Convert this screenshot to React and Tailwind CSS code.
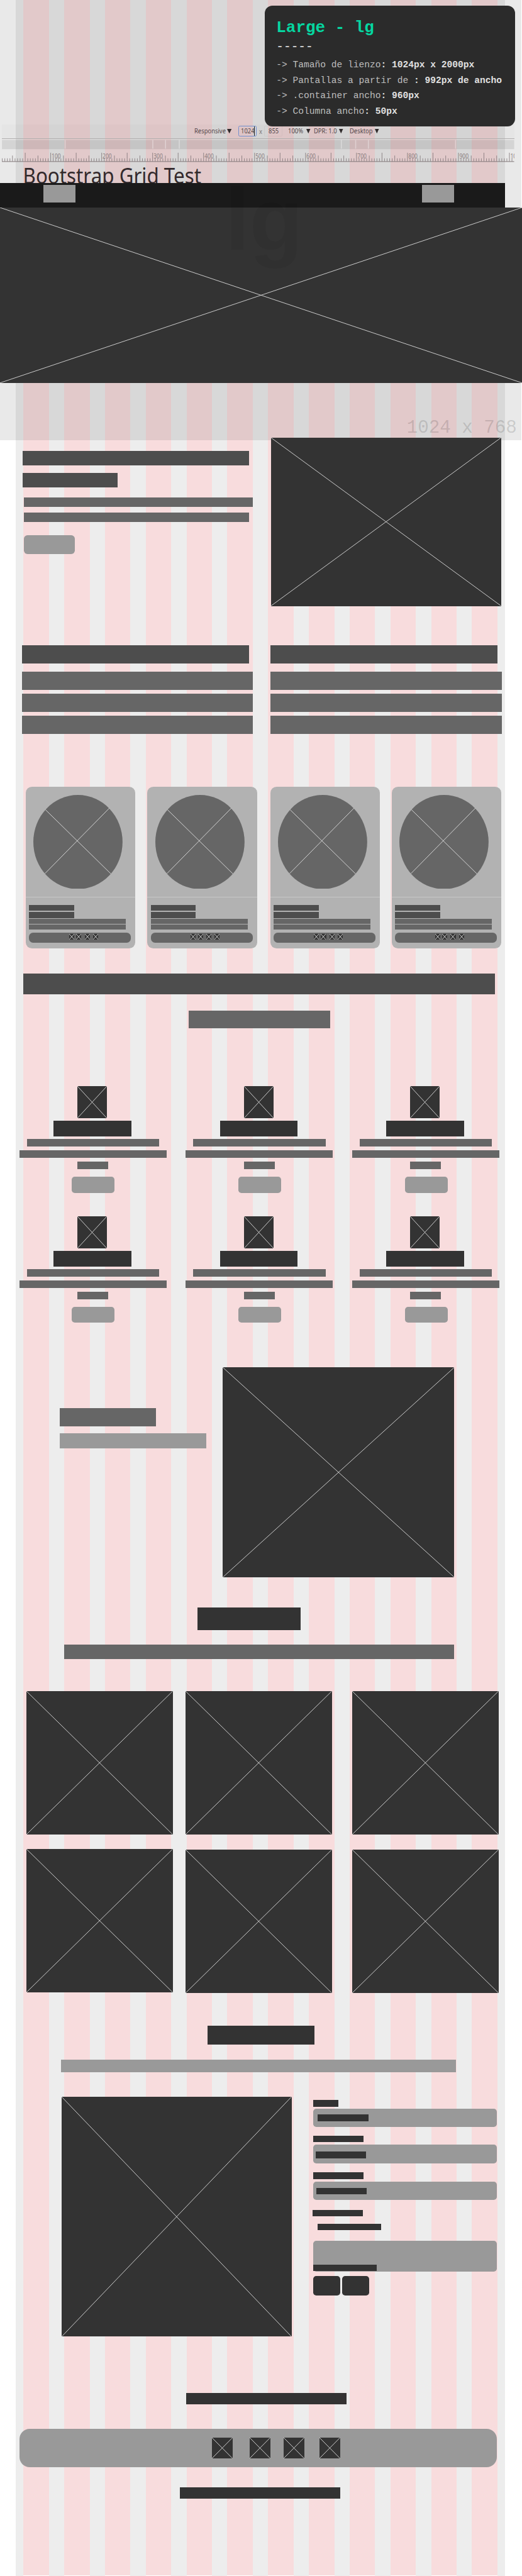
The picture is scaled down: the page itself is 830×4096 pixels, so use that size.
import React from "react";

/* Placeholder picture: a filled box with both diagonals. */
function Picture({ className }) {
  return (
    <div className={`shrink-0 bg-[#333333] ${className}`}>
      <svg className="block h-full w-full" viewBox="0 0 100 100" preserveAspectRatio="none">
        <path d="M0 0L100 100M100 0L0 100" fill="none" stroke="#dedede" strokeWidth="1.1" vectorEffect="non-scaling-stroke" />
      </svg>
    </div>
  );
}

/* Placeholder line of text. */
function Bar({ className }) {
  return <div className={`shrink-0 ${className}`} />;
}

function GridColumns() {
  return (
    <div className="absolute inset-y-0 left-[31px] flex w-[960px] gap-[30px] bg-[#ededed] px-[15px]">
      {Array.from({ length: 12 }, (_, i) => (
        <div key={i} className="h-full w-[50px] border-b-2 border-white bg-[#f8dcdd]" />
      ))}
    </div>
  );
}

function InfoLine({ label, value }) {
  return (
    <p className="h-[30.2px] text-[#bdbdbd]">
      -&gt; {label}
      <b className="text-[#e0e0e0]">: {value}</b>
    </p>
  );
}

function InfoPanel() {
  return (
    <div className="relative z-10 ml-[520px] h-[237px] w-[491px] shrink-0 whitespace-pre rounded-[15px] bg-[#2b2b2b] pl-[22px] pt-[24px] font-['Liberation_Mono','Courier_New',monospace] text-[18px] leading-[30px]">
      <h1 className="h-[40px] text-[32px] font-bold leading-[40px] text-[#06d6a0]">Large - lg</h1>
      <p className="mt-[3px] h-[30px] text-[24px] leading-[30px] text-[#e6e6e6]">-----</p>
      <div className="mt-[4.5px]">
        <InfoLine label="Tamaño de lienzo" value="1024px x 2000px" />
        <InfoLine label="Pantallas a partir de " value="992px de ancho" />
        <InfoLine label=".container ancho" value="960px" />
        <InfoLine label="Columna ancho" value="50px" />
      </div>
    </div>
  );
}

function Label({ className, children }) {
  return (
    <div className={`shrink-0 whitespace-nowrap ${className}`}>
      <span className="inline-block origin-left scale-x-[0.83]">{children}</span>
    </div>
  );
}

function Caret({ className }) {
  return (
    <svg className={`h-[9px] shrink-0 ${className}`} viewBox="0 0 9 9" preserveAspectRatio="none">
      <path d="M0 0H9L4.5 9Z" fill="#2f2a2b" />
    </svg>
  );
}

function Toolbar() {
  return (
    <div className="ml-[4px] flex h-[29px] w-[1005px] items-center border-b border-[#b0aeae] bg-black/[0.015] pl-[377px] pb-[2px] font-['Noto_Sans','Open_Sans',sans-serif] text-[14px] leading-[20px] text-[#544649]">
      <Label className="w-[65px]">Responsive</Label>
      <Caret className="w-[9px]" />
      <div className="ml-[13px] flex h-[21px] w-[36px] shrink-0 items-center rounded-[3px] border-2 border-[#7390d0] pl-[3px]">
        <Label className="w-[26px]">1024</Label>
        <div className="h-[18px] w-px shrink-0 bg-[#222222]" />
      </div>
      <Label className="ml-[4px] w-[10.5px] pt-[2px] text-[#7d7779]">x</Label>
      <div className="flex h-[21px] w-[35px] shrink-0 items-center rounded-[2px] border border-black/[0.04] pl-[7px]">
        <Label className="w-[20px]">855</Label>
      </div>
      <Label className="ml-[12px] w-[36px]">100%</Label>
      <Caret className="w-[8px]" />
      <Label className="ml-[6px] w-[50px]">DPR: 1.0</Label>
      <Caret className="w-[8px]" />
      <Label className="ml-[13px] w-[49px]">Desktop</Label>
      <Caret className="w-[8px]" />
    </div>
  );
}

const breakpoints = [128, 300, 325, 352, 670, 698, 723, 894];

function Ruler() {
  const ticks = [];
  for (let n = 5; n <= 1005; n += 5) {
    const height = n % 50 === 0 ? 17 : n % 25 === 0 ? 11.5 : 6;
    ticks.push(<path key={n} d={`M${n - 4.3} 44V${44 - height}`} stroke="#7d7375" strokeWidth="1" />);
  }
  return (
    <svg className="ml-[4px] block h-[45px] w-[1005px] shrink-0" viewBox="0 0 1005 45">
      <rect x="0" y="2" width="1005" height="18" fill="#000" fillOpacity="0.085" />
      {breakpoints.map((x) => (
        <rect key={x} x={x - 5} y="2" width="2" height="17" fill="#fff" fillOpacity="0.35" />
      ))}
      {ticks}
      <path d="M0 44.3H1005" stroke="#7d7375" strokeWidth="1.2" />
      <g fontFamily="'Noto Sans', sans-serif" fontSize="13" fill="#8a7d7f">
        {[100, 200, 300, 400, 500, 600, 700, 800, 900].map((n) => (
          <text key={n} x={n - 2.5} y="38" textLength="18" lengthAdjust="spacingAndGlyphs">{n}</text>
        ))}
        <text x="997.5" y="38" textLength="24" lengthAdjust="spacingAndGlyphs">1000</text>
      </g>
    </svg>
  );
}

function Header() {
  return (
    <header className="flex h-[359px] flex-col overflow-hidden">
      <div className="h-[244px] shrink-0 pt-[11px]">
        <InfoPanel />
      </div>
      <Toolbar />
      <Ruler />
      <h2 className="h-[41px] origin-left scale-x-[0.92] whitespace-nowrap pl-[49px] font-['Noto_Sans','Open_Sans',sans-serif] text-[42px] leading-[53px] text-[#332a2c]">
        Bootstrap Grid Test
      </h2>
    </header>
  );
}

function Nav() {
  return (
    <nav className="flex h-[48px] w-[991px] justify-between bg-[#1a1a1a] pl-[85px] pr-[100.5px] pt-[4px]">
      <Bar className="h-[34px] w-[62.5px] bg-[#999999]" />
      <Bar className="h-[34px] w-[62.5px] bg-[#999999]" />
    </nav>
  );
}

function Intro() {
  return (
    <section className="flex h-[514.3px] pt-[108.2px]">
      <div className="w-[532px] pl-[44px] pt-[25.3px]">
        <Bar className="h-[28.2px] w-[444px] bg-[#4d4d4d]" />
        <Bar className="mt-[15.5px] h-[27.8px] w-[187px] bg-[#4d4d4d]" />
        <Bar className="ml-[3.5px] mt-[20px] h-[17.9px] w-[448.5px] bg-[#666666]" />
        <Bar className="ml-[3.5px] mt-[11.6px] h-[18.2px] w-[441px] bg-[#666666]" />
        <Bar className="ml-[3.5px] mt-[25.7px] h-[37.1px] w-[99px] rounded-[7px] bg-[#999999]" />
      </div>
      <Picture className="h-[329.8px] w-[451px]" />
    </section>
  );
}

function Paragraph() {
  return (
    <div className="w-[453px]">
      <Bar className="h-[36.3px] w-[445px] bg-[#4d4d4d]" />
      <Bar className="mt-[15.9px] h-[35.5px] bg-[#666666]" />
      <Bar className="mt-[7.6px] h-[36px] bg-[#666666]" />
      <Bar className="mt-[7.9px] h-[35.6px] bg-[#666666]" />
    </div>
  );
}

function Paragraphs() {
  return (
    <section className="flex h-[277.6px] gap-[35px] pl-[43px]">
      <Paragraph />
      <Paragraph />
    </section>
  );
}

function ProfileCard({ className }) {
  return (
    <div className={`h-[317px] w-[215px] shrink-0 rounded-[12px] bg-[#b2b2b2] ${className}`}>
      <div className="h-[218px] border-b border-[#c8c8c8] pl-[15.3px] pt-[16px]">
        <svg className="block h-[184.6px] w-[175px]" viewBox="0 0 175 184.6">
          <ellipse cx="87.5" cy="92.3" rx="87.5" ry="92.3" fill="#666666" />
          <path d="M24 29.2L152 154.6M149 26L23 154" fill="none" stroke="#dedede" strokeWidth="1.1" />
        </svg>
      </div>
      <div className="pl-[6.5px] pt-[14.1px]">
        <Bar className="h-[11.9px] w-[88.5px] bg-[#4d4d4d]" />
        <Bar className="mt-[2px] h-[11.9px] w-[88.5px] bg-[#4d4d4d]" />
        <Bar className="mt-[2.3px] h-[9px] w-[190px] bg-[#666666]" />
        <Bar className="mt-[1.9px] h-[9px] w-[190px] bg-[#666666]" />
        <div className="mt-[6.3px] flex h-[19.6px] w-[200px] rounded-[8px] bg-[#666666] pl-[78.5px] pt-[3px]">
          <Picture className="h-[11px] w-[10px]" />
          <Picture className="ml-[4.5px] h-[11px] w-[10px]" />
          <Picture className="ml-[6.2px] h-[11px] w-[10px]" />
          <Picture className="ml-[6.2px] h-[11px] w-[10px]" />
        </div>
      </div>
    </div>
  );
}

function Profiles() {
  return (
    <section className="flex h-[367.1px] pl-[50.3px]">
      <ProfileCard />
      <ProfileCard className="ml-[24px]" />
      <ProfileCard className="ml-[26px]" />
      <ProfileCard className="ml-[23px]" />
    </section>
  );
}

function Feature() {
  return (
    <div className="h-[255.2px] w-[288.5px]">
      <Picture className="ml-[114px] h-[63px] w-[58px]" />
      <Bar className="ml-[67px] mt-[5.8px] h-[30px] w-[152.5px] bg-[#333333]" />
      <Bar className="ml-[14.5px] mt-[5.3px] h-[14.7px] w-[259.5px] bg-[#666666]" />
      <Bar className="mt-[8.1px] h-[14.5px] bg-[#666666]" />
      <Bar className="ml-[114px] mt-[7.5px] h-[15px] w-[60.5px] bg-[#666666]" />
      <Bar className="ml-[103px] mt-[14.1px] h-[31.8px] w-[84px] rounded-[6px] bg-[#999999]" />
    </div>
  );
}

function Features() {
  return (
    <section className="h-[772px]">
      <Bar className="ml-[45.7px] h-[40.7px] w-[925.5px] bg-[#4d4d4d]" />
      <Bar className="ml-[370.6px] mt-[32.2px] h-[33.9px] w-[277px] bg-[#666666]" />
      <div className="mt-[113.5px] grid w-max grid-cols-3 gap-x-[38px] pl-[38px]">
        {Array.from({ length: 6 }, (_, i) => (
          <Feature key={i} />
        ))}
      </div>
    </section>
  );
}

function Showcase() {
  return (
    <section className="flex h-[471.9px]">
      <div className="w-[436.3px] pl-[117px] pt-[80px]">
        <Bar className="h-[36px] w-[189.5px] bg-[#666666]" />
        <Bar className="mt-[13.8px] h-[29px] w-[288px] bg-[#999999]" />
      </div>
      <Picture className="h-[412.3px] w-[454.7px]" />
    </section>
  );
}

function GalleryColumn({ className }) {
  return (
    <div className={`flex flex-col gap-[28.7px] ${className}`}>
      <Picture className="h-[281.3px] w-[287px]" />
      <Picture className="h-[281.3px] w-[287px]" />
    </div>
  );
}

function Gallery() {
  return (
    <section className="h-[819.9px]">
      <Bar className="ml-[387.3px] h-[44.1px] w-[202.3px] bg-[#333333]" />
      <Bar className="ml-[126px] mt-[28.1px] h-[29px] w-[765px] bg-[#666666]" />
      <div className="mt-[62.2px] flex">
        <GalleryColumn className="ml-[52.2px]" />
        <GalleryColumn className="ml-[25.2px] pt-[0.8px]" />
        <GalleryColumn className="ml-[40px] pt-[0.8px]" />
      </div>
    </section>
  );
}

function Field({ labelClass, inputClass }) {
  return (
    <div className="flex flex-col">
      <Bar className={`h-[12.7px] bg-[#333333] ${labelClass}`} />
      <div className={`h-[36.4px] w-[361px] rounded-[6px] bg-[#999999] ${inputClass}`}>
        <Bar className="h-[13px] w-[99px] bg-[#333333]" />
      </div>
    </div>
  );
}

function Contact() {
  return (
    <section className="h-[720.2px]">
      <Bar className="ml-[407.5px] h-[37.3px] w-[209.3px] bg-[#333333]" />
      <Bar className="ml-[119.3px] mt-[29.1px] h-[24.7px] w-[775px] bg-[#999999]" />
      <div className="mt-[48.1px] flex pl-[121.3px]">
        <Picture className="h-[470.6px] w-[451px]" />
        <div className="ml-[41.6px] flex flex-col pt-[7px]">
          <Field labelClass="w-[50px]" inputClass="mt-[3.8px] pl-[9.7px] pt-[11.7px]" />
          <div className="mt-[17px]">
            <Field labelClass="w-[99px]" inputClass="mt-[5.2px] pl-[5px] pt-[13.3px]" />
          </div>
          <div className="mt-[17.7px]">
            <Field labelClass="w-[99px]" inputClass="mt-[5.4px] pl-[6.3px] pt-[12.2px]" />
          </div>
          <Bar className="-ml-[1.3px] mt-[18.7px] h-[13px] w-[99px] bg-[#333333]" />
          <Bar className="ml-[9px] mt-[14px] h-[13px] w-[124.7px] bg-[#333333]" />
          <div className="mt-[20.8px] flex h-[60.2px] w-[361px] items-end rounded-[6px] bg-[#999999] pb-[1.2px]">
            <Bar className="h-[12.6px] w-[125px] bg-[#333333]" />
          </div>
          <div className="mt-[9.2px] flex gap-[4.2px]">
            <Bar className="h-[37.7px] w-[53.2px] rounded-[6px] bg-[#333333]" />
            <Bar className="h-[37.7px] w-[53.2px] rounded-[6px] bg-[#333333]" />
          </div>
        </div>
      </div>
    </section>
  );
}

function Footer() {
  return (
    <footer className="h-[359px]">
      <Bar className="ml-[365.5px] h-[22.7px] w-[314px] bg-[#333333]" />
      <div className="ml-[38px] mt-[48.6px] flex h-[74.3px] w-[937px] rounded-[20px] bg-[#999999] pl-[378.3px] pt-[17px]">
        <Picture className="h-[40.7px] w-[40.3px]" />
        <Picture className="ml-[33.5px] h-[40.7px] w-[40.3px]" />
        <Picture className="ml-[26.2px] h-[40.7px] w-[40.3px]" />
        <Picture className="ml-[30px] h-[40.7px] w-[40.3px]" />
      </div>
      <Bar className="ml-[353.4px] mt-[39.7px] h-[22.7px] w-[313.5px] bg-[#333333]" />
    </footer>
  );
}

export default function App() {
  return (
    <div className="relative h-[5053px] w-[1024px] overflow-hidden bg-white [zoom:0.81055]">
      <GridColumns />
      <div className="absolute left-0 top-0 h-[864px] w-[1023px] bg-[#242424]/10" />
      <div className="absolute left-[798px] top-[818px] whitespace-pre font-['Liberation_Mono','Courier_New',monospace] text-[36px] leading-[44px] text-black/15">
        1024 x 768
      </div>
      <main className="relative">
        <Header />
        <Nav />
        <Picture className="h-[344px] w-[1024px]" />
        <Intro />
        <Paragraphs />
        <Profiles />
        <Features />
        <Showcase />
        <Gallery />
        <Contact />
        <Footer />
      </main>
      <div className="absolute left-[442px] top-[336px] font-['Liberation_Sans',Arial,sans-serif] text-[171px] font-bold leading-[190px] text-black/[0.06]">
        lg
      </div>
    </div>
  );
}
